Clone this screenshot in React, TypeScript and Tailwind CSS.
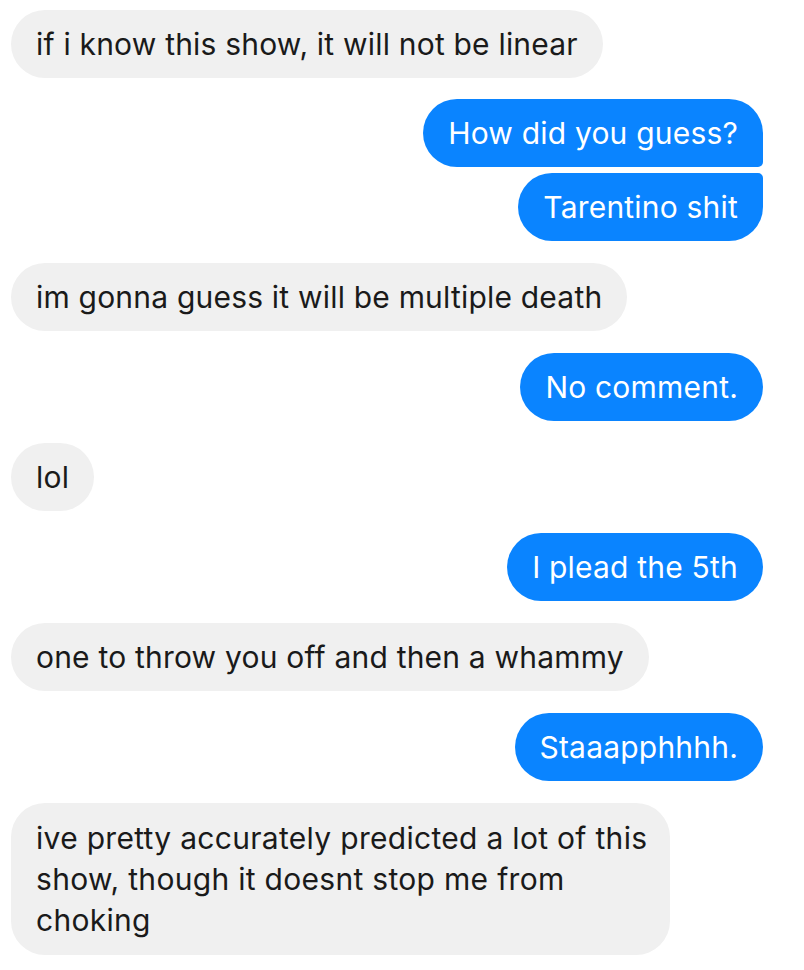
import React from "react";

type Msg = { text: string; me: boolean; cls?: string; gapTop: number };

const msgs: Msg[] = [
  { text: "if i know this show, it will not be linear", me: false, gapTop: 10 },
  { text: "How did you guess?", me: true, cls: "rounded-[34px] rounded-br-[5px]", gapTop: 21 },
  { text: "Tarentino shit", me: true, cls: "rounded-[34px] rounded-tr-[5px]", gapTop: 6 },
  { text: "im gonna guess it will be multiple death", me: false, gapTop: 22 },
  { text: "No comment.", me: true, gapTop: 22 },
  { text: "lol", me: false, gapTop: 22 },
  { text: "I plead the 5th", me: true, gapTop: 22 },
  { text: "one to throw you off and then a whammy", me: false, gapTop: 22 },
  { text: "Staaapphhhh.", me: true, gapTop: 22 },
];

export default function App() {
  return (
    <div
      className="w-[804px] h-[970px] bg-white overflow-hidden flex flex-col pl-[11px] pr-[41px]"
      style={{ fontFamily: 'Inter, "Noto Sans", sans-serif' }}
    >
      {msgs.map((m, i) => (
        <div
          key={i}
          className={`flex ${m.me ? "justify-end" : "justify-start"}`}
          style={{ marginTop: m.gapTop }}
        >
          <div
            className={`px-[25px] py-[13.5px] text-[30px] leading-[41px] tracking-[0.2px] whitespace-nowrap ${
              m.me ? "bg-[#0a84ff] text-white" : "bg-[#f0f0f0] text-[#1a1a1a]"
            } ${m.cls ?? "rounded-[34px]"}`}
          >
            {m.text}
          </div>
        </div>
      ))}
      <div className="flex justify-start mt-[22px]">
        <div className="w-[659px] px-[25px] py-[14.5px] text-[30px] leading-[41px] tracking-[0.3px] whitespace-nowrap bg-[#f0f0f0] text-[#1a1a1a] rounded-[34px]">
          ive pretty accurately predicted a lot of this
          <br />
          show, though it doesnt stop me from
          <br />
          choking
        </div>
      </div>
    </div>
  );
}
